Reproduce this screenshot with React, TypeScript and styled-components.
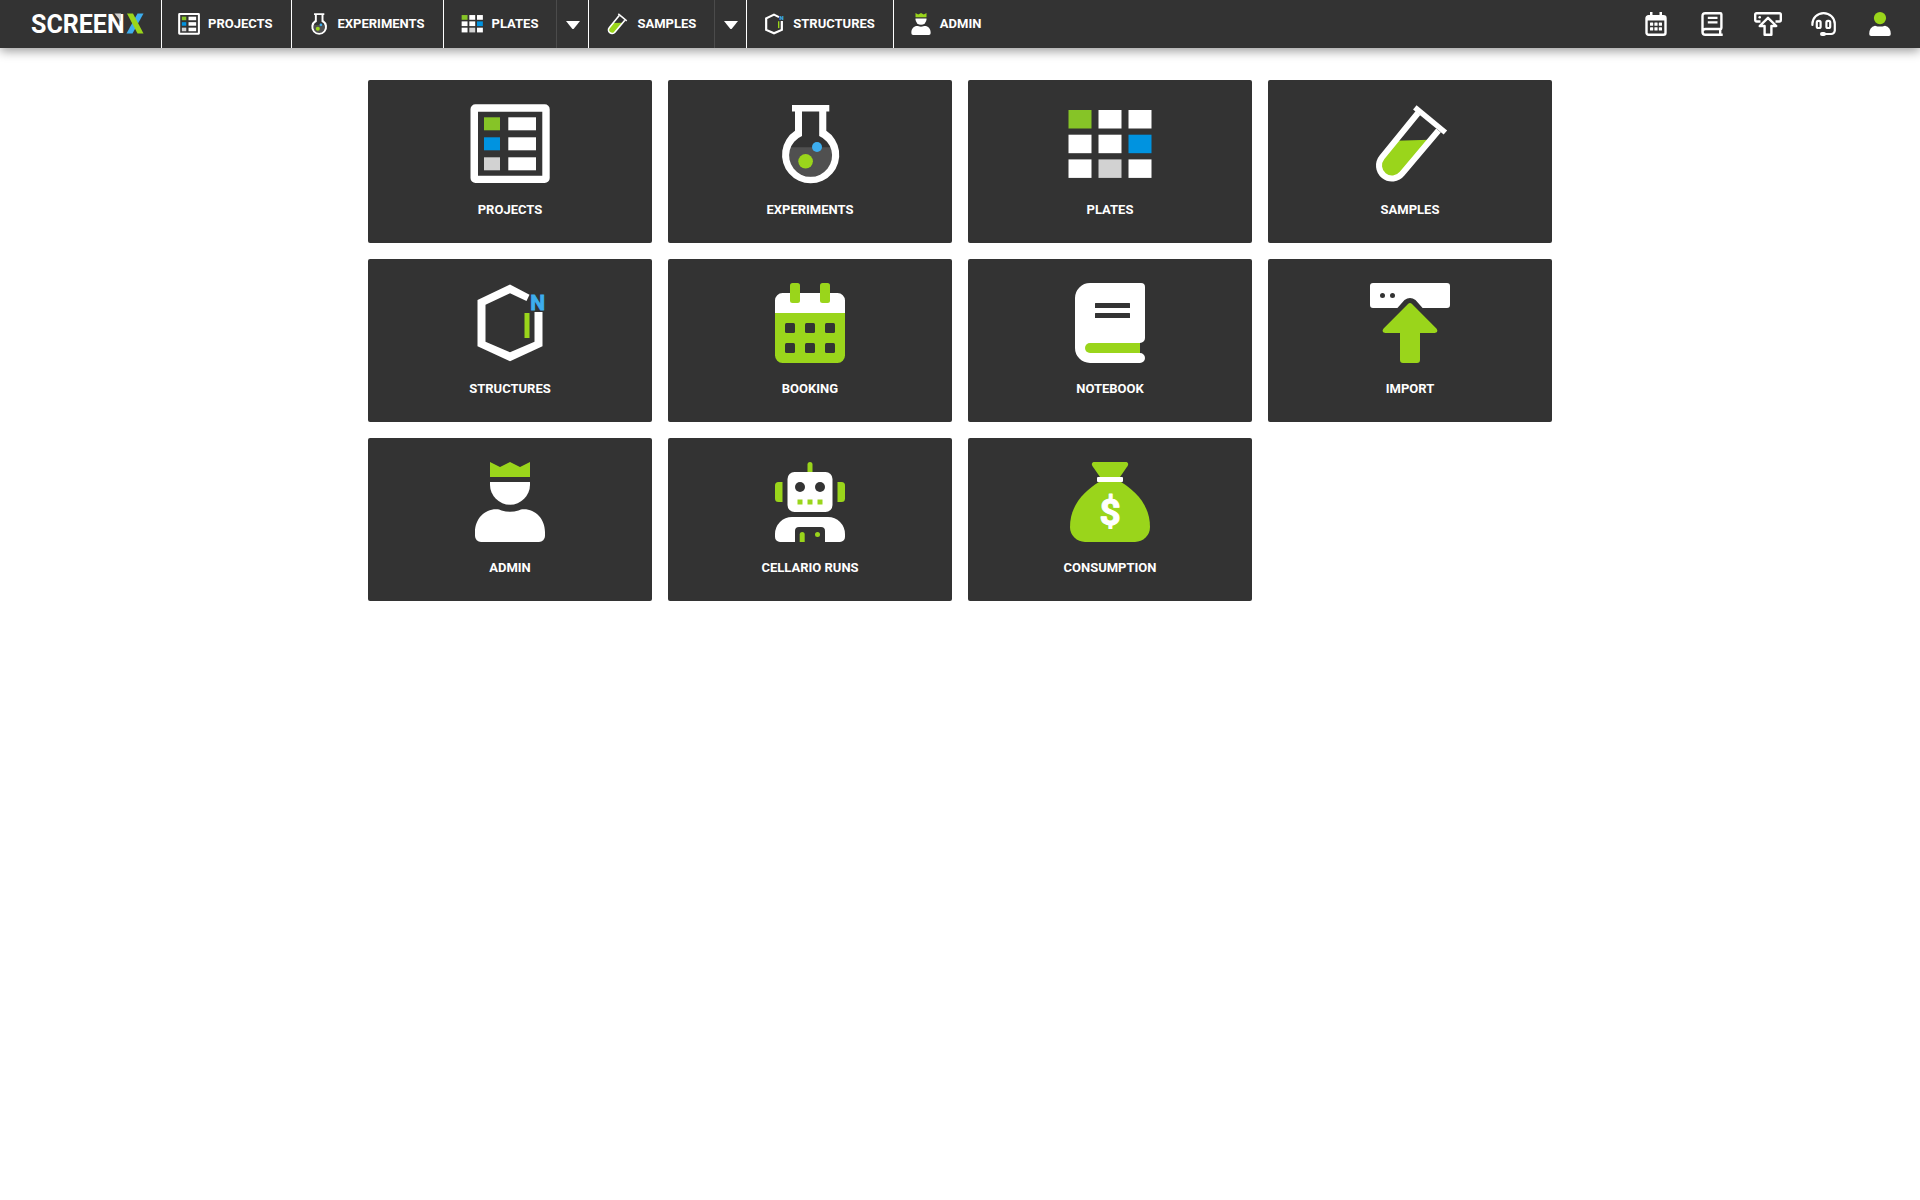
import React from "react";
import styled, { createGlobalStyle } from "styled-components";

const colors = {
  panel: "#333333",
  white: "#ffffff",
  lime: "#9ad51b",
  green: "#86c427",
  blue: "#0093e0",
  sky: "#3dadee",
  grey: "#d2d2d2",
  liquid: "#505050",
};

const GlobalStyle = createGlobalStyle`
  *, *::before, *::after { box-sizing: border-box; }
  body {
    margin: 0;
    background: #ffffff;
    font-family: Roboto, "Liberation Sans", sans-serif;
    font-size: 13px;
    line-height: 19px;
  }
`;

/* ---------- layout ---------- */

const Header = styled.header`
  display: flex;
  justify-content: space-between;
  height: 48px;
  background: ${colors.panel};
  box-shadow: 0 3px 10px rgba(0, 0, 0, 0.4);
`;

const Left = styled.div`
  display: flex;
`;

const Logo = styled.a`
  display: flex;
  align-items: center;
  width: 161px;
  padding-left: 31px;
`;

const Nav = styled.nav`
  display: flex;
`;

const NavGroup = styled.div`
  display: flex;
  border-left: 1px solid ${colors.white};
`;

const NavLink = styled.a<{ $menu?: boolean }>`
  display: flex;
  align-items: center;
  gap: ${(p) => (p.$menu ? 9 : 8)}px;
  padding: 0 18px 0 ${(p) => (p.$menu ? 17 : 16)}px;
  color: ${colors.white};
  font-weight: 700;
  line-height: 18px;
  text-decoration: none;
`;

const Toggle = styled.button`
  display: flex;
  align-items: center;
  justify-content: center;
  width: 32px;
  padding: 2px 0 0;
  border: 0;
  border-left: 1px solid #4b4b4b;
  background: none;
  cursor: pointer;
`;

const Tools = styled.div`
  display: flex;
  padding-right: 12px;
`;

const Tool = styled.button`
  display: flex;
  align-items: center;
  justify-content: center;
  width: 56px;
  padding: 0;
  border: 0;
  background: none;
  cursor: pointer;
`;

const Main = styled.main`
  max-width: 1216px;
  margin: 0 auto;
  padding: 32px 16px;
`;

const Tiles = styled.div`
  display: grid;
  grid-template-columns: repeat(4, 1fr);
  gap: 16px;
`;

const Tile = styled.a`
  display: flex;
  flex-direction: column;
  align-items: center;
  gap: 16px;
  padding: 24px;
  border-radius: 2px;
  background: ${colors.panel};
  color: ${colors.white};
  font-weight: 700;
  text-decoration: none;
`;

const Svg = styled.svg<{ $size: number }>`
  display: block;
  flex: none;
  width: ${(p) => p.$size}px;
  height: ${(p) => p.$size}px;
  overflow: visible;
`;

/* ---------- 80-unit pictograms, shared by the bar and the tiles ---------- */

const ProjectsArt = () => (
  <>
    <path
      fill="#fff"
      fillRule="evenodd"
      d="M5.5 0.3H74.700A5 5 0 0 1 79.700 5.3V74A5 5 0 0 1 74.700 79H5.500A5 5 0 0 1 0.500 74V5.3A5 5 0 0 1 5.500 0.3ZM8 7.700V71.700H72.300V7.700Z"
    />
    {[colors.green, colors.blue, colors.grey].map((c, i) => (
      <g key={c}>
        <rect x="14" y={13.3 + i * 20} width="16" height="13" fill={c} />
        <rect x="38.300" y={13.3 + i * 20} width="27.700" height="13" fill="#fff" />
      </g>
    ))}
  </>
);

const FlaskArt = () => (
  <>
    <path d="M20 43.3H61.5A22 22 0 1 1 20 43.3Z" fill={colors.liquid} />
    <path
      fillRule="evenodd"
      fill="#fff"
      d="M22 1H59.3V7.5H56.3V26.8A28.6 28.6 0 1 1 25 26.8V7.5H22ZM32 7.5V32A21.5 21.3 0 1 0 49.2 32V7.5Z"
    />
    <circle cx="35.6" cy="57.3" r="7.3" fill={colors.lime} />
    <circle cx="47" cy="43" r="5" fill={colors.sky} />
  </>
);

const plateCells = [
  [colors.green, "#fff", "#fff"],
  ["#fff", "#fff", colors.blue],
  ["#fff", colors.grey, "#fff"],
];

const PlatesArt = () => (
  <>
    {plateCells.map((row, r) =>
      row.map((c, i) => (
        <rect key={`${r}-${i}`} x={-1.5 + i * 30} y={6 + r * 24.7} width="23" height="18.5" fill={c} />
      )),
    )}
  </>
);

const TubeArt = () => (
  <>
    <path d="M25.4 36.7L59.6 35.7L32.1 69.7A13 13 0 0 1 11.9 53.3Z" fill={colors.lime} />
    <path d="M48 9L11.9 53.3A13 13 0 0 0 32.1 69.7L68.5 26.5" fill="none" stroke="#fff" strokeWidth="6" />
    <path d="M44.8 3.3L75.4 28.5" stroke="#fff" strokeWidth="5.5" />
  </>
);

const StructureArt = () => (
  <>
    <path
      fill="#fff"
      d="M59.5 11.7L40 1.5L7.5 17V63.3L40 78.2L72.5 63.3V29H64.5V58.7L40 69.3L15.5 58.7V21.7L40 10.3L56.5 18Z"
    />
    <rect x="54.5" y="30" width="5" height="25" fill={colors.lime} />
    <text
      x="67.7"
      y="26.7"
      textAnchor="middle"
      fontSize="21"
      fontWeight="700"
      fill={colors.sky}
      stroke={colors.sky}
      strokeWidth="0.8"
    >
      N
    </text>
  </>
);

const BookingArt = () => (
  <>
    <path d="M5 30H75V72.5A7.5 7.5 0 0 1 67.5 80H12.5A7.5 7.5 0 0 1 5 72.5Z" fill={colors.lime} />
    <path d="M12.5 10H67.5A7.5 7.5 0 0 1 75 17.5V30H5V17.5A7.5 7.5 0 0 1 12.5 10Z" fill="#fff" />
    <rect x="20" y="0" width="10" height="20" rx="2.5" fill={colors.lime} />
    <rect x="50" y="0" width="10" height="20" rx="2.5" fill={colors.lime} />
    {[40, 60].map((y) =>
      [15, 35, 55].map((x) => (
        <rect key={`${x}-${y}`} x={x} y={y} width="10" height="10" rx="1.5" fill={colors.panel} />
      )),
    )}
  </>
);

const NotebookArt = () => (
  <>
    <path
      fill="#fff"
      d="M20 0H71A4 4 0 0 1 75 4V55A5 5 0 0 1 70 60V70A5 5 0 0 1 75 75A5 5 0 0 1 70 80H20A15 15 0 0 1 5 65V15A15 15 0 0 1 20 0Z"
    />
    <path d="M20 60H70V70H20A5 5 0 0 1 20 60Z" fill={colors.lime} />
    <rect x="25" y="20" width="35" height="5" rx="0.5" fill={colors.panel} />
    <rect x="25" y="30" width="35" height="5" rx="0.5" fill={colors.panel} />
  </>
);

const ImportArt = () => (
  <>
    <path
      fill="#fff"
      d="M3 0H77A3 3 0 0 1 80 3V22A3 3 0 0 1 77 25H52.6L45.5 17Q40 13 34.5 17L27.4 25H3A3 3 0 0 1 0 22V3A3 3 0 0 1 3 0Z"
    />
    <circle cx="12.5" cy="12.5" r="2.5" fill={colors.panel} />
    <circle cx="22.5" cy="12.5" r="2.5" fill={colors.panel} />
    <path
      fill={colors.lime}
      d="M38 21Q40 19 42 21L66.4 45.6C68.4 48 67 50 64.6 50H50V77A3 3 0 0 1 47 80H33A3 3 0 0 1 30 77V50H15.4C13 50 11.6 48 13.6 45.6Z"
    />
  </>
);

const AdminArt = () => (
  <>
    <path d="M20 0L30 5L40 0L50 5L60 0V15H20Z" fill={colors.lime} />
    <path d="M20 20H60V22.7A20 20 0 0 1 20 22.7Z" fill="#fff" />
    <path
      fill="#fff"
      d="M26 47.3C14.5 47.3 5 57 5 70V74A6 6 0 0 0 11 80H69A6 6 0 0 0 75 74V70C75 57 65.5 47.3 54 47.3C51.5 47.3 50 47.8 48.5 48.5Q40 51 31.5 48.5C30 47.8 28.5 47.3 26 47.3Z"
    />
  </>
);

const RobotArt = () => (
  <>
    <path d="M37.5 10V2.5A2.5 2.5 0 0 1 42.5 2.5V10Z" fill={colors.lime} />
    <rect x="17.5" y="10" width="45" height="40" rx="7" fill="#fff" />
    <circle cx="30" cy="25" r="5" fill={colors.panel} />
    <circle cx="50" cy="25" r="5" fill={colors.panel} />
    {[27.5, 37.5, 47.5].map((x) => (
      <rect key={x} x={x} y="37.5" width="5" height="5" fill={colors.lime} />
    ))}
    <path d="M12.5 20V40H8.5A3.5 3.5 0 0 1 5 36.5V23.5A3.5 3.5 0 0 1 8.5 20Z" fill={colors.lime} />
    <path d="M67.5 20V40H71.5A3.5 3.5 0 0 0 75 36.5V23.5A3.5 3.5 0 0 0 71.5 20Z" fill={colors.lime} />
    <path
      fill="#fff"
      d="M22 55H58A17 17 0 0 1 75 72V75A5 5 0 0 1 70 80H55V69A4 4 0 0 0 51 65H29A4 4 0 0 0 25 69V80H10A5 5 0 0 1 5 75V72A17 17 0 0 1 22 55Z"
    />
    <path d="M29.7 80V72.5A2.5 2.5 0 0 1 34.7 72.5V80Z" fill={colors.lime} />
    <circle cx="47.5" cy="72.5" r="2.5" fill={colors.lime} />
  </>
);

const MoneyArt = () => (
  <>
    <path d="M24.5 0H55.5C58 0 58.8 2 57.6 4L50 15H30L22.4 4C21.2 2 22 0 24.5 0Z" fill={colors.lime} />
    <rect x="27" y="15" width="26" height="5" rx="1" fill="#fff" />
    <path d="M29 20H51C64 28 80 42 80 65A15 15 0 0 1 65 80H15A15 15 0 0 1 0 65C0 42 16 28 29 20Z" fill={colors.lime} />
    <text
      x="40"
      y="63"
      textAnchor="middle"
      fontSize="37"
      fontWeight="700"
      fill="#fff"
      stroke="#fff"
      strokeWidth="1"
      strokeLinejoin="round"
    >
      $
    </text>
  </>
);

const Art = ({ size, box = "0 0 80 80", children }: { size: number; box?: string; children: React.ReactNode }) => (
  <Svg $size={size} viewBox={box} aria-hidden="true">
    {children}
  </Svg>
);

/* ---------- bar icons ---------- */

const CalendarIcon = () => (
  <svg width="24" height="24" viewBox="0 0 24 24" aria-hidden="true">
    <rect x="2.5" y="4.2" width="19" height="18.6" rx="2" fill="none" stroke="#fff" strokeWidth="2.4" />
    <path d="M2 4H22V8.5H2ZM6 0H8.5V4H6ZM15.5 0H18V4H15.5Z" fill="#fff" />
    {[10.5, 15.2].map((y) =>
      [6, 10.4, 14.8].map((x) => <rect key={`${x}-${y}`} x={x} y={y} width="3.2" height="3.2" rx="0.5" fill="#fff" />),
    )}
  </svg>
);

const BookIcon = () => (
  <svg width="24" height="24" viewBox="0 0 24 24" fill="none" stroke="#fff" strokeWidth="2.4" aria-hidden="true">
    <path d="M2.5 20V4A2.8 2.8 0 0 1 5.3 1.2H20.4A1 1 0 0 1 21.4 2.2V16A1 1 0 0 1 20.4 17H5.4A2.9 2.9 0 0 0 5.4 22.8H22.7" />
    <path d="M20.2 17V22.8" />
    <path d="M7.8 5.8H17.5M7.8 10.3H17.5" strokeWidth="2.2" />
  </svg>
);

const UploadIcon = () => (
  <svg
    width="28"
    height="24"
    viewBox="0 0 28 24"
    fill="none"
    stroke="#fff"
    strokeWidth="2.4"
    strokeLinejoin="round"
    aria-hidden="true"
  >
    <path d="M6.5 9.5H2.6A1.4 1.4 0 0 1 1.2 8.1V2.6A1.4 1.4 0 0 1 2.6 1.2H25.4A1.4 1.4 0 0 1 26.8 2.6V8.1A1.4 1.4 0 0 1 25.4 9.5H21.5" />
    <path d="M14 5.8L22.3 14H17.4V22.8H10.6V14H5.7Z" />
    <circle cx="5.7" cy="5.2" r="1.3" fill="#fff" stroke="none" />
  </svg>
);

const HeadsetIcon = () => (
  <svg
    width="26"
    height="24"
    viewBox="0 0 26 24"
    fill="none"
    stroke="#fff"
    strokeWidth="2.2"
    strokeLinecap="round"
    aria-hidden="true"
  >
    <path d="M1.4 13V12A11.2 10.9 0 0 1 23.8 12V18.5A3.6 3.6 0 0 1 20.2 22H13" />
    <rect x="5.8" y="8.8" width="3.8" height="7.2" rx="1.6" />
    <rect x="15.4" y="8.8" width="3.8" height="7.2" rx="1.6" />
    <path d="M11 22H13" strokeWidth="4" />
  </svg>
);

const UserIcon = () => (
  <svg width="24" height="24" viewBox="0 0 24 24" aria-hidden="true">
    <circle cx="12" cy="6.1" r="6.1" fill={colors.lime} />
    <path d="M7 13.7Q12 15.5 17 13.7Q22.8 15 22.8 22A2 2 0 0 1 20.8 24H3.2A2 2 0 0 1 1.2 22Q1.2 15 7 13.7Z" fill="#fff" />
  </svg>
);

const Caret = () => (
  <svg width="14" height="8" viewBox="0 0 14 8" aria-hidden="true">
    <path d="M0 0H14L8 7.4Q7 8.4 6 7.4Z" fill="#fff" />
  </svg>
);

const LogoMark = () => (
  <svg width="114" height="36" viewBox="0 0 114 36" role="img" aria-label="SCREENX">
    <text x="0" y="27" fontSize="25" fontWeight="700" fill="#fff">
      SCREEN
    </text>
    <path d="M83.5 7.5H90V15.5Z" fill={colors.grey} />
    <path d="M106.5 7.5H112.5L101.5 27.5H95.5Z" fill={colors.sky} />
    <path d="M96 7.5H102L112.5 27.5H106.5Z" fill={colors.lime} />
  </svg>
);

/* ---------- data ---------- */

const navItems = [
  { label: "PROJECTS", art: <ProjectsArt /> },
  { label: "EXPERIMENTS", art: <FlaskArt /> },
  { label: "PLATES", art: <PlatesArt />, menu: true, box: "-4 -2 86 86" },
  { label: "SAMPLES", art: <TubeArt />, menu: true },
  { label: "STRUCTURES", art: <StructureArt /> },
  { label: "ADMIN", art: <AdminArt /> },
];

const tools = [
  { label: "Booking", icon: <CalendarIcon /> },
  { label: "Notebook", icon: <BookIcon /> },
  { label: "Import", icon: <UploadIcon /> },
  { label: "Support", icon: <HeadsetIcon /> },
  { label: "Account", icon: <UserIcon /> },
];

const tiles = [
  { label: "PROJECTS", art: <ProjectsArt /> },
  { label: "EXPERIMENTS", art: <FlaskArt /> },
  { label: "PLATES", art: <PlatesArt /> },
  { label: "SAMPLES", art: <TubeArt /> },
  { label: "STRUCTURES", art: <StructureArt /> },
  { label: "BOOKING", art: <BookingArt /> },
  { label: "NOTEBOOK", art: <NotebookArt /> },
  { label: "IMPORT", art: <ImportArt /> },
  { label: "ADMIN", art: <AdminArt /> },
  { label: "CELLARIO RUNS", art: <RobotArt /> },
  { label: "CONSUMPTION", art: <MoneyArt /> },
];

export default function App() {
  return (
    <>
      <GlobalStyle />
      <Header>
        <Left>
          <Logo href="#home">
            <LogoMark />
          </Logo>
          <Nav>
            {navItems.map((item) => (
              <NavGroup key={item.label}>
                <NavLink href={`#${item.label.toLowerCase()}`} $menu={item.menu}>
                  <Art size={22} box={item.box}>
                    {item.art}
                  </Art>
                  {item.label}
                </NavLink>
                {item.menu && (
                  <Toggle type="button" aria-label={`${item.label} menu`}>
                    <Caret />
                  </Toggle>
                )}
              </NavGroup>
            ))}
          </Nav>
        </Left>
        <Tools>
          {tools.map((tool) => (
            <Tool key={tool.label} type="button" aria-label={tool.label}>
              {tool.icon}
            </Tool>
          ))}
        </Tools>
      </Header>
      <Main>
        <Tiles>
          {tiles.map((tile) => (
            <Tile key={tile.label} href={`#${tile.label.toLowerCase().replace(" ", "-")}`}>
              <Art size={80}>{tile.art}</Art>
              {tile.label}
            </Tile>
          ))}
        </Tiles>
      </Main>
    </>
  );
}
